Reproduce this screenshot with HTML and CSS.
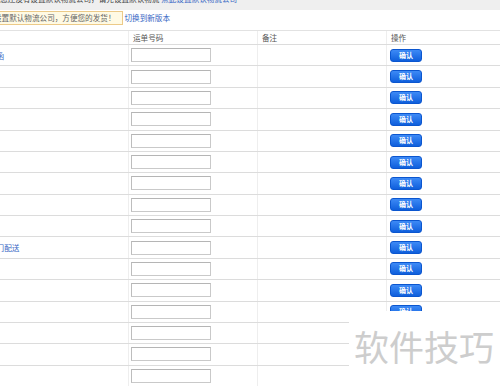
FILE: index.html
```html
<!DOCTYPE html>
<html lang="zh-CN">
<head>
    <meta charset="UTF-8">
    <meta name="viewport" content="width=device-width, initial-scale=1.0">
    <title>发货</title>
    <link rel="stylesheet" href="styles.css">
</head>
<body>
<div class="page">
    <div class="topbar">
        <span class="topbar-inner">您还没有设置默认物流公司，请先设置默认物流 <a class="tip-link">点此设置默认物流公司</a></span>
    </div>
    <div class="notice-row">
        <div class="notice">设置默认物流公司，方便您的发货！</div>
        <a class="switch-link">切换到新版本</a>
    </div>

    <div class="grid-row grid-head">
        <div class="cell first"></div>
        <div class="cell head-cell">运单号码</div>
        <div class="cell head-cell">备注</div>
        <div class="cell head-cell">操作</div>
    </div>

    <div id="rows"></div>

    <div class="watermark">软件技巧</div>
</div>

<script>
    // build the order rows
    const rows = document.getElementById("rows");
    const names = { 0: "信函", 9: "上门配送" };

    for (let i = 0; i < 16; i++) {
        const row = document.createElement("div");
        row.className = "grid-row";
        // rows under the watermark show no button
        const btn = i < 13 ? '<button type="button" class="confirm-btn">确认</button>' : '';
        row.innerHTML =
            '<div class="cell first"><a class="name-link">' + (names[i] || "") + '</a></div>' +
            '<div class="cell input-cell"><input type="text" class="track-input"></div>' +
            '<div class="cell"></div>' +
            '<div class="cell btn-cell">' + btn + '</div>';
        rows.appendChild(row);
    }
</script>
</body>
</html>
```

FILE: styles.css
```css
body {
    margin: 0;
    font-family: "Noto Sans CJK SC", "Liberation Sans", sans-serif;
    font-size: 7.6px;
    color: #555;
    background: #fff;
    overflow: hidden;
}

a {
    color: #3566c4;
    text-decoration: none;
}

.page {
    position: relative;
    height: 386px;
    overflow: hidden;
}

/* top tip bar, mostly scrolled out of view */
.topbar {
    height: 10px;
    background: #efefef;
    overflow: hidden;
    white-space: nowrap;
    line-height: 10px;
}

.topbar-inner {
    display: block;
    margin-top: -6px;
    color: #444;
}

.notice-row {
    height: 20px;
    display: flex;
    align-items: flex-start;
    white-space: nowrap;
}

.notice {
    margin: 1px 0 0 -11px;
    height: 14px;
    box-sizing: border-box;
    border: 1px solid #ecca88;
    background: #fffae4;
    padding: 0 6px 0 4px;
    line-height: 12px;
    color: #666;
}

.switch-link {
    margin: 2px 0 0 2px;
    line-height: 12px;
}

/* table */
.grid-row {
    display: grid;
    grid-template-columns: 128px 129px 129px 1fr;
    height: 21.38px;
    box-sizing: border-box;
    border-bottom: 1px solid #dcdcdc;
}

.grid-head {
    height: 15px;
    border-top: 1px solid #e2e2e2;
}

.cell {
    display: flex;
    align-items: center;
    border-left: 1px solid #eee;
    padding-left: 3px;
    white-space: nowrap;
    overflow: hidden;
}

.cell.first {
    border-left: none;
    padding-left: 0;
}

.head-cell {
    padding-left: 4px;
    color: #555;
}

.name-link {
    margin-left: -11px;
}

.input-cell {
    padding-left: 2px;
}

.track-input {
    width: 80px;
    height: 14px;
    box-sizing: border-box;
    margin: 0;
    padding: 0;
    border: 1px solid #c9c9c9;
    border-top-color: #b5b5b5;
    border-left-color: #bdbdbd;
    background: #fff;
}

.confirm-btn {
    width: 32px;
    height: 13px;
    margin: 0;
    padding: 0;
    border: 1px solid #0b56cf;
    border-radius: 3px;
    background: linear-gradient(#3d8af6, #0f5fdc);
    color: #fff;
    font-family: "Noto Sans CJK SC", sans-serif;
    font-size: 7px;
    font-weight: bold;
    line-height: 11px;
    cursor: pointer;
}

.watermark {
    position: absolute;
    left: 349px;
    top: 311px;
    right: 0;
    bottom: 0;
    background: #fff;
    padding: 17px 0 0 5px;
    font-size: 35px;
    line-height: 35px;
    color: #cdcdcd;
    white-space: nowrap;
}
```
